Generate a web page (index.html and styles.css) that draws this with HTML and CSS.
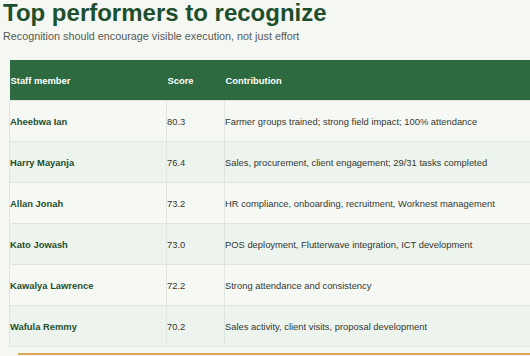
FILE: index.html
```html
<!DOCTYPE html>
<html>
<head>
<meta charset="utf-8">
<link rel="stylesheet" href="styles.css">
</head>
<body>
<div class="page">
  <h1 class="title">Top performers to recognize</h1>
  <p class="subtitle">Recognition should encourage visible execution, not just effort</p>
  <table class="perf">
    <thead>
      <tr><th class="c-name">Staff member</th><th class="c-score">Score</th><th class="c-contrib">Contribution</th></tr>
    </thead>
    <tbody>
      <tr><td class="name">Aheebwa Ian</td><td>80.3</td><td>Farmer groups trained; strong field impact; 100% attendance</td></tr>
      <tr><td class="name">Harry Mayanja</td><td>76.4</td><td>Sales, procurement, client engagement; 29/31 tasks completed</td></tr>
      <tr><td class="name">Allan Jonah</td><td>73.2</td><td>HR compliance, onboarding, recruitment, Worknest management</td></tr>
      <tr><td class="name">Kato Jowash</td><td>73.0</td><td>POS deployment, Flutterwave integration, ICT development</td></tr>
      <tr><td class="name">Kawalya Lawrence</td><td>72.2</td><td>Strong attendance and consistency</td></tr>
      <tr><td class="name">Wafula Remmy</td><td>70.2</td><td>Sales activity, client visits, proposal development</td></tr>
    </tbody>
  </table>
  <div class="rule"></div>
</div>
</body>
</html>
```
FILE: styles.css
```css
html, body { margin: 0; padding: 0; }
body {
  background: #f5f7f3;
  font-family: "Liberation Sans", Arial, sans-serif;
  width: 530px;
  height: 356px;
  overflow: hidden;
}
.page { padding: 0 0 0 3px; }
.title {
  margin: 0;
  font-size: 24px;
  line-height: 26px;
  font-weight: bold;
  color: #1e4f2d;
}
.subtitle {
  margin: 4px 0 0 0;
  font-size: 10.8px;
  line-height: 13px;
  color: #555a55;
}
.perf {
  margin: 17px 0 0 6px;
  border-collapse: collapse;
  width: 521px;
  table-layout: fixed;
  font-size: 9.4px;
}
.perf th {
  background: #2d6a3f;
  color: #ffffff;
  text-align: left;
  font-weight: bold;
  height: 40px;
  padding: 0 0 0 1px;
  border: none;
}
.c-name { width: 156px; }
.c-score { width: 57px; }
.perf td {
  height: 40px;
  padding: 0;
  border: 1px solid #e1e5df;
  color: #333833;
}
.perf td:last-child { border-right: none; }
.perf tbody tr:nth-child(odd) td { background: #f6f8f4; }
.perf tbody tr:nth-child(even) td { background: #edf3ed; }
.perf td.name { color: #1e4f2d; font-weight: bold; }
.rule {
  margin: 6px 0 0 15px;
  height: 2px;
  background: #dba85c;
}
```
